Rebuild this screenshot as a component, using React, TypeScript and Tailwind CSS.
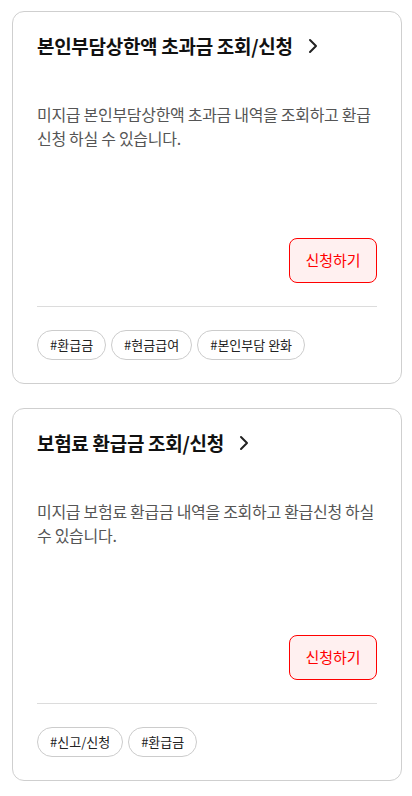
const cards = [
  {
    title: "본인부담상한액 초과금 조회/신청",
    desc: "미지급 본인부담상한액 초과금 내역을 조회하고 환급 신청 하실 수 있습니다.",
    tags: ["#환급금", "#현금급여", "#본인부담 완화"],
  },
  {
    title: "보험료 환급금 조회/신청",
    desc: "미지급 보험료 환급금 내역을 조회하고 환급신청 하실 수 있습니다.",
    tags: ["#신고/신청", "#환급금"],
  },
];

const Chevron = () => (
  <svg width="12" height="16" viewBox="0 0 12 16" fill="none" className="shrink-0">
    <polyline points="3,2 9,8 3,14" stroke="#222" strokeWidth="2" strokeLinecap="round" strokeLinejoin="round" />
  </svg>
);

export default function App() {
  return (
    <div
      className="bg-white pl-3 pt-[11px] pb-4 flex flex-col gap-6"
      style={{ fontFamily: '"Noto Sans CJK KR", "Noto Sans", sans-serif' }}
    >
      {cards.map((c) => (
        <div key={c.title} className="w-[390px] border border-[#cfcfcf] rounded-xl px-6 pt-[23px] pb-[23px] flex flex-col">
          <div className="flex items-center gap-[14px] h-[22px]">
            <h2 className="text-[19px] font-bold text-[#111] leading-[22px] tracking-[-0.3px]">{c.title}</h2>
            <Chevron />
          </div>
          <p className="mt-[45px] text-[16px] leading-6 text-[#555] tracking-[-0.3px] h-12">{c.desc}</p>
          <div className="flex justify-end mt-[88px]">
            <button className="w-[88px] h-[45px] rounded-lg border border-[#ff0000] bg-[#fff0f0] text-[#ff0000] text-[15px]">
              신청하기
            </button>
          </div>
          <div className="mt-[23px] border-t border-[#dcdcdc]" />
          <div className="mt-[23px] flex gap-[5px]">
            {c.tags.map((t) => (
              <span key={t} className="h-[30px] px-3 rounded-full border border-[#cccccc] text-[13px] text-[#222] flex items-center">
                {t}
              </span>
            ))}
          </div>
        </div>
      ))}
    </div>
  );
}
